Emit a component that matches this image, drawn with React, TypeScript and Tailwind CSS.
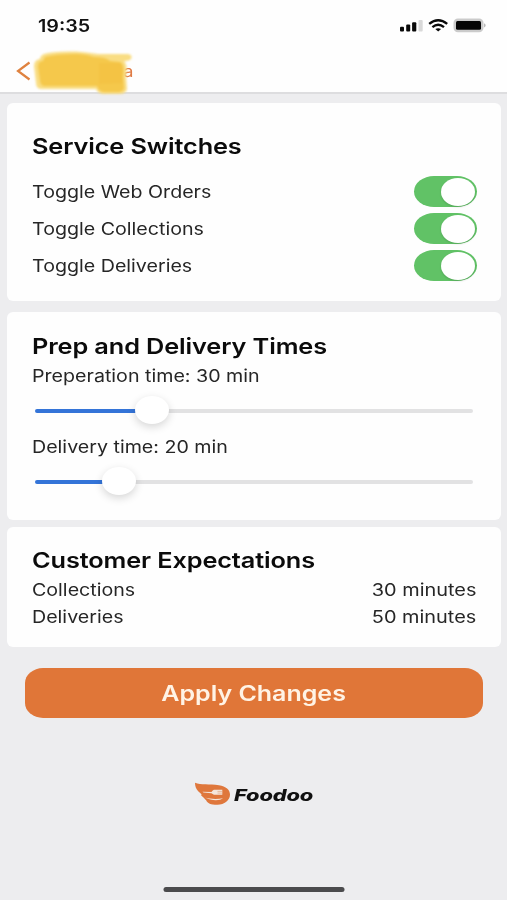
import type { ReactNode } from "react";

function Heading({ children }: { children: ReactNode }) {
  return (
    <h2 className="w-max origin-left scale-x-[1.15] text-[22px] leading-7 font-semibold tracking-[-0.1px] text-[#0b0b0b]">
      {children}
    </h2>
  );
}

function Label({ children, end = false }: { children: ReactNode; end?: boolean }) {
  return (
    <span
      className={`block w-max text-[17px] leading-[26px] text-[#262626] ${end ? "origin-right scale-x-[1.17]" : "origin-left scale-x-[1.155]"}`}
    >
      {children}
    </span>
  );
}

function Toggle() {
  return (
    <button
      role="switch"
      aria-checked="true"
      className="flex h-[31px] w-[63px] items-center justify-end rounded-[20px/15.5px] bg-[#61c266] pr-[2px]"
    >
      <span className="h-[28px] w-[34px] rounded-[50%] bg-white shadow-[0_1px_2px_rgba(0,0,0,0.15)]" />
    </button>
  );
}

function Slider({ fill }: { fill: number }) {
  return (
    <div className="mr-[4px] ml-[3px] flex h-[30px] items-center">
      <div className="h-1 rounded-l-full bg-[#3474d8]" style={{ width: fill }} />
      <div className="z-10 -mt-[2px] -mr-1 -ml-1 h-[28px] w-[34px] shrink-0 rounded-[50%] bg-white shadow-[0_3px_8px_rgba(0,0,0,0.16)]" />
      <div className="h-1 flex-1 rounded-r-full bg-[#e2e2e3]" />
    </div>
  );
}

function StatusIcons() {
  return (
    <svg width="88" height="16" viewBox="0 0 88 16">
      <g fill="#090909">
        <rect x="1" y="9.8" width="4" height="4.6" rx="1" />
        <rect x="7.2" y="7.5" width="4" height="6.9" rx="1" />
        <rect x="13.1" y="5.2" width="4.2" height="9.2" rx="1" />
        <rect x="19.5" y="3" width="4.2" height="11.4" rx="1" fill="#d9d9d9" />
      </g>
      <g fill="none" stroke="#090909" strokeWidth="2.4">
        <path d="M30.2 6.9Q39.2 -0.2 48.2 6.9" />
        <path d="M33.4 10.1Q39.2 5.5 45 10.1" />
      </g>
      <path d="M36.3 12.1Q39.2 10.2 42.1 12.1L39.2 14.5Z" fill="#090909" />
      <rect x="54.5" y="1.5" width="30" height="13.8" rx="4.5" fill="#cbcbcb" />
      <rect x="57" y="4" width="25" height="8.8" rx="1.5" fill="#050505" />
      <path d="M85.2 6.3Q88 8.4 85.2 10.5Z" fill="#aaa" />
    </svg>
  );
}

function Logo() {
  return (
    <div className="ml-[194px] flex h-6 items-center">
      <svg width="37" height="24" viewBox="0 0 37 24">
        <path
          d="M1 0.8C7 3 15 2 25 3.2C32 4.2 36 7.8 36 12.6C36 18.7 30 23 23 22.8C17 22.8 13.3 20.9 12.3 18.4L9.5 15.4L7.2 13.4L7.5 12.2L4.2 9.3C1.8 6.8 1 4 1 0.8Z"
          fill="#df773c"
        />
        <path
          d="M8.5 9.8L17.5 9.9C18.5 8.4 19.5 7.8 21 7.8H28.3V12.7H21C19.5 12.7 18.5 12.1 17.5 11.2L9.5 10.6Z"
          fill="#f4e6dc"
        />
        <path d="M23.5 9.4H28.3M23.5 11.1H28.3" stroke="#df9a70" strokeWidth="0.6" />
        <path d="M11 15.6C17 17.4 24 17.4 29 16.2C26 18.8 18 19 11 15.6Z" fill="#f4e6dc" />
      </svg>
      <span className="mt-[2px] ml-[3px] w-max origin-left scale-x-[1.36] text-[16px] leading-6 font-extrabold tracking-[-0.1px] text-[#111] italic">
        Foodoo
      </span>
    </div>
  );
}

export default function App() {
  return (
    <div className="flex h-[900px] w-[507px] flex-col overflow-hidden bg-[#ededef] font-['Inter',sans-serif]">
      <header className="h-[94px] shrink-0 border-b-2 border-[#dddddf] bg-[#fefefe]">
        <div className="flex h-[50px] items-center justify-between pr-[20px] pl-[38px]">
          <span className="mt-1 origin-left scale-x-[1.16] text-[17px] font-semibold text-[#111]">19:35</span>
          <StatusIcons />
        </div>
        <div className="relative flex h-[42px] items-center pl-4">
          <svg width="15" height="22" viewBox="0 0 15 22">
            <path d="M13.5 2.5L2 11L13.5 19.5" fill="none" stroke="#df823f" strokeWidth="2.2" />
          </svg>
          <span className="ml-[92px] origin-left scale-x-[1.17] text-[16px] text-[#df7b45]">a</span>
          <svg className="absolute top-0 left-[32px] blur-[0.8px]" width="104" height="48" viewBox="0 0 104 48">
            <path d="M12 4Q20 1 44 1.5Q54 2 66 4L96 4Q101 5 99 9Q97 11 92 11Q96 15 94 26L95 39Q94 44 87 44L72 44Q66 44 64 39L10 39Q4 39 4 33L2 16Q2 10 8 9Q8 6 12 4Z" fill="#f9dd83" />
            <path d="M13 7Q24 4 44 4Q54 4 62 7Q74 7 78 11L88 12Q93 14 91 27L92 38Q91 42 86 42L73 42Q67 42 65 36L12 36Q8 35 8 30L6 17Q6 11 11 11Z" fill="#f5c84b" />
            <path d="M67 13L89 13Q91 16 90 27L91 33L67 34Z" fill="#f3bf40" opacity=".55" />
          </svg>
        </div>
      </header>

      <main className="flex flex-col px-[6.5px] pt-[9px]">
        <section className="h-[198px] rounded-md bg-[#fefefe] pt-[29px] pr-6 pl-[25px]">
          <Heading>Service Switches</Heading>
          <div className="mt-[13px]">
            {["Toggle Web Orders", "Toggle Collections", "Toggle Deliveries"].map((name) => (
              <div key={name} className="flex h-[37px] items-center justify-between">
                <Label>{name}</Label>
                <Toggle />
              </div>
            ))}
          </div>
        </section>

        <section className="mt-[11px] h-[208px] rounded-md bg-[#fefefe] pt-[20px] pr-6 pl-[25px]">
          <Heading>Prep and Delivery Times</Heading>
          <div className="mt-[3px]">
            <Label>Preperation time: 30 min</Label>
          </div>
          <div className="mt-[7px]">
            <Slider fill={104} />
          </div>
          <div className="mt-[8px]">
            <Label>Delivery time: 20 min</Label>
          </div>
          <div className="mt-[7px]">
            <Slider fill={71} />
          </div>
        </section>

        <section className="mt-[7px] h-[120px] rounded-md bg-[#fefefe] pt-[19px] pr-6 pl-[25px]">
          <Heading>Customer Expectations</Heading>
          <div className="mt-[3px] flex justify-between">
            <Label>Collections</Label>
            <Label end>30 minutes</Label>
          </div>
          <div className="mt-[1px] flex justify-between">
            <Label>Deliveries</Label>
            <Label end>50 minutes</Label>
          </div>
        </section>

        <button className="mt-[21px] mr-[18px] ml-[18.5px] flex h-[50px] items-center justify-center rounded-[18px/15px] bg-[#e07638]">
          <span className="mt-[2px] scale-x-[1.19] text-[21px] font-semibold text-[#fff3e5]">Apply Changes</span>
        </button>
      </main>

      <div className="mt-[64px]">
        <Logo />
      </div>
      <div className="mx-auto mt-auto mb-[8px] h-[5px] w-[181px] translate-x-[0.5px] rounded-full bg-[#4b4b4d]" />
    </div>
  );
}
